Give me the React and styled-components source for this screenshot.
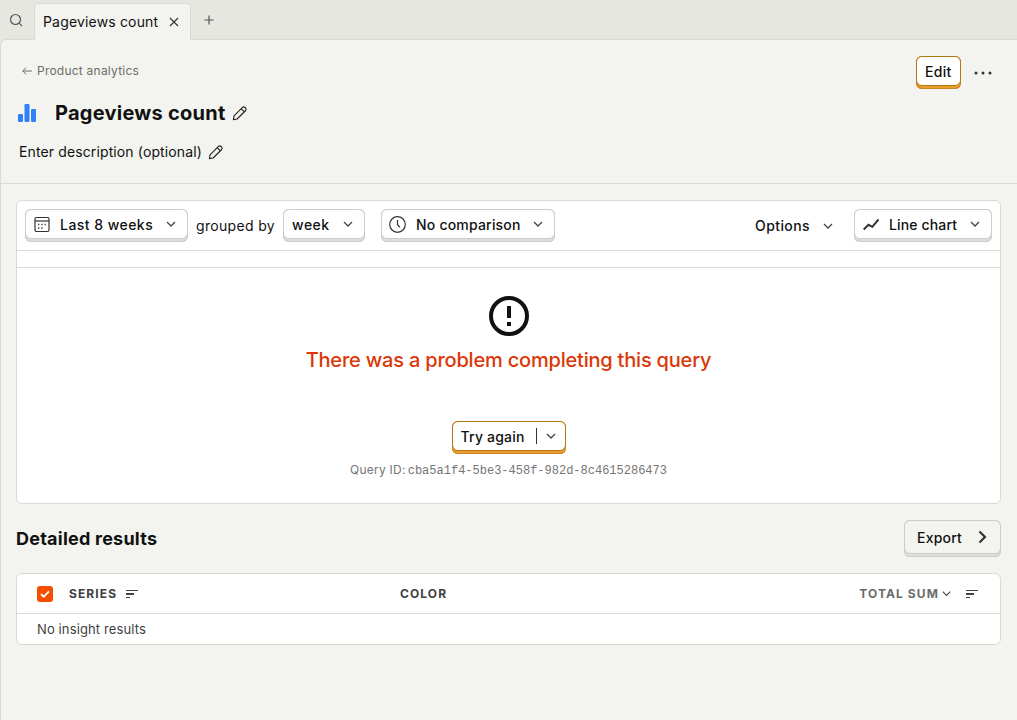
import React from "react";
import styled, { createGlobalStyle } from "styled-components";

const Global = createGlobalStyle`
  *, *::before, *::after { box-sizing: border-box; }
  body {
    margin: 0;
    background: #e5e7e0;
    color: #111;
    font-family: Inter, "Liberation Sans", sans-serif;
    font-size: 14px;
    line-height: 20px;
  }
  svg { display: block; flex: none; }
`;

const Page = styled.div`
  display: flex;
  flex-direction: column;
  width: 100%;
  height: 720px;
  overflow: hidden;
  background: #e5e7e0;
`;

const TabBar = styled.nav`
  display: flex;
  align-items: flex-start;
  height: 39px;
  padding-top: 3px;
  flex: none;
`;

const TabIcon = styled.button`
  display: flex;
  align-items: center;
  justify-content: center;
  width: ${(p) => p.$width}px;
  height: 34px;
  padding: 0;
  border: 0;
  background: none;
  color: #555;
`;

const Tab = styled.div`
  position: relative;
  z-index: 1;
  display: flex;
  align-items: center;
  justify-content: space-between;
  width: 157px;
  height: 37px;
  margin-left: 2px;
  padding: 0 10px 0 8px;
  border: 1px solid #d9dbd2;
  border-bottom: 0;
  border-radius: 5px 5px 0 0;
  background: #f3f4ef;
  letter-spacing: 0.17px;
  white-space: nowrap;
`;

const Scene = styled.main`
  flex: 1;
  border: 1px solid #d9dbd2;
  border-width: 1px 0 0 1px;
  border-radius: 6px 0 0 0;
  background: #f3f4ef;
`;

const Header = styled.header`
  display: flex;
  justify-content: space-between;
  height: 144px;
  padding: 16px 16px 0 16px;
  border-bottom: 1px solid #d9dbd2;
`;

const HeaderText = styled.div`
  display: flex;
  flex-direction: column;
`;

const Breadcrumb = styled.a`
  display: flex;
  align-items: center;
  gap: 5px;
  height: 30px;
  padding-left: 5px;
  color: #6c6d6a;
  font-size: 12px;
  letter-spacing: 0.23px;
`;

const TitleRow = styled.div`
  display: flex;
  align-items: center;
  height: 54px;
`;

const Title = styled.h1`
  margin: 0 6px 0 18px;
  font-size: 20px;
  line-height: 28px;
  font-weight: 700;
  letter-spacing: 0.25px;
  white-space: nowrap;
`;

const Description = styled.div`
  display: flex;
  align-items: center;
  gap: 6px;
  height: 24px;
  padding-left: 2px;
  letter-spacing: 0.12px;
`;

const HeaderActions = styled.div`
  display: flex;
  align-items: flex-start;
  gap: 13px;
  padding-right: 9px;
`;

const MoreButton = styled.button`
  display: flex;
  align-items: center;
  width: 18px;
  height: 33px;
  padding: 0;
  border: 0;
  background: none;
  color: #333;
`;

const ButtonFrame = styled.button`
  flex: none;
  display: block;
  width: ${(p) => p.$width}px;
  height: ${(p) => p.$height || 33}px;
  padding: 0 0 3px;
  border: 0;
  border-radius: 6px;
  font: inherit;
  letter-spacing: ${(p) => p.$spacing || 0.2}px;
  color: #111;
  background: ${(p) => (p.$primary ? "#eb9d2a" : "#e1dddd")};
  box-shadow: inset 0 -1px 0 ${(p) => (p.$primary ? "#c98521" : "#ccc")},
    inset 1px 0 0 ${(p) => (p.$primary ? "#c98521" : "#ccc")},
    inset -1px 0 0 ${(p) => (p.$primary ? "#c98521" : "#ccc")};
`;

const ButtonFace = styled.span`
  display: flex;
  align-items: center;
  height: 100%;
  padding: 0 ${(p) => p.$padRight || 10}px 0 ${(p) => p.$padLeft || 8}px;
  border: 1px solid ${(p) => (p.$primary ? "#b17816" : "#ccc")};
  border-radius: 6px;
  background: ${(p) => (p.$plain ? "#f3f4ef" : "#fff")};
  font-weight: 500;
  white-space: nowrap;
  & > svg:first-child:not(:last-child) { margin: 0 10px 0 -1px; }
  & > svg:last-child { margin-left: auto; }
`;

const ButtonLabel = styled.span`
  padding-top: 2px;
`;

const ButtonRule = styled.span`
  width: 1px;
  height: 16px;
  margin-left: auto;
  margin-right: 8px;
  background: #333;
  & + svg:last-child { margin-left: 0; }
`;

const Content = styled.div`
  padding: 16px 16px 0 15px;
`;

const Card = styled.section`
  border: 1px solid #d9dbd2;
  border-radius: 6px;
  background: #fff;
`;

const Toolbar = styled.div`
  display: flex;
  align-items: flex-start;
  height: 50px;
  padding: 8px 8px 0;
  border-bottom: 1px solid #d9dbd2;
`;

const ToolbarLabel = styled.span`
  width: 95px;
  padding: 7px 0 0 8px;
  letter-spacing: 0.33px;
  white-space: nowrap;
`;

const ToolbarGap = styled.div`
  width: ${(p) => p.$width || 0}px;
  flex: ${(p) => (p.$width ? "none" : 1)};
`;

const OptionsButton = styled.button`
  display: flex;
  align-items: center;
  justify-content: space-between;
  width: 79px;
  height: 33px;
  margin-right: 20px;
  padding: 0;
  border: 0;
  background: none;
  color: #111;
  font: inherit;
  font-weight: 500;
  letter-spacing: 0.42px;
`;

const FilterStrip = styled.div`
  height: 17px;
  border-bottom: 1px solid #d9dbd2;
`;

const ErrorState = styled.div`
  display: flex;
  flex-direction: column;
  align-items: center;
  height: 235px;
  padding-top: 24px;
`;

const ErrorTitle = styled.h2`
  margin: 6px 0 47px;
  color: #db3707;
  font-size: 20px;
  line-height: 28px;
  font-weight: 500;
  letter-spacing: -0.2px;
  white-space: nowrap;
`;

const QueryId = styled.div`
  display: flex;
  gap: 2px;
  margin-top: 8px;
  color: #757575;
  font-size: 12px;
  line-height: 16px;
  letter-spacing: 0.25px;
  white-space: nowrap;
  code {
    font-family: "Liberation Mono", monospace;
    font-size: 12px;
    letter-spacing: 0;
    padding-top: 1px;
  }
`;

const ResultsHeader = styled.div`
  display: flex;
  align-items: center;
  justify-content: space-between;
  padding: 16px 0;
`;

const SectionTitle = styled.h2`
  margin: 0;
  font-size: 18px;
  line-height: 28px;
  font-weight: 700;
  letter-spacing: 0.23px;
`;

const TableHead = styled.div`
  display: grid;
  grid-template-columns: 363px 1fr auto;
  align-items: center;
  height: 40px;
  padding: 0 22px 0 20px;
  border-bottom: 1px solid #d9dbd2;
  color: #3f3f3f;
  font-size: 12px;
  font-weight: 700;
  letter-spacing: 1.1px;
`;

const HeadCell = styled.div`
  display: flex;
  align-items: center;
  color: ${(p) => (p.$muted ? "#6c6d6a" : "inherit")};
`;

const Checkbox = styled.span`
  display: flex;
  align-items: center;
  justify-content: center;
  width: 16px;
  height: 16px;
  margin-right: 16px;
  border-radius: 3px;
  background: #f54e00;
`;

const SortSlot = styled.span`
  margin-left: ${(p) => p.$left}px;
  color: #444;
`;

const EmptyRow = styled.div`
  height: 30px;
  padding: 5px 20px;
  color: #3f3f3f;
  font-size: 13px;
  letter-spacing: 0.12px;
`;

const Chevron = ({ size = 12 }) => (
  <svg width={size} height={size} viewBox="0 0 12 12" fill="none" stroke="#444" strokeWidth="1.25">
    <path d="M2 4l4 4 4-4" />
  </svg>
);

const Pencil = () => (
  <svg width="16" height="16" viewBox="0 0 16 16" fill="none" stroke="#222" strokeWidth="1.1" strokeLinejoin="round">
    <path d="M1.4 14.6l.6-3.7 8.500-8.600q1.300-1 2.500.2l.5.5q1.200 1.200.2 2.500l-8.600 8.500z" />
    <path d="M9.200 3.700l3.100 3.100" />
  </svg>
);

const SortIcon = () => (
  <svg width="12" height="8" viewBox="0 0 12 8" fill="currentColor" shapeRendering="crispEdges">
    <path d="M0 0h12v1H0zM0 3h8v2H0zM0 7h4v1H0z" />
  </svg>
);

const Button = ({ children, label, icon, width, height, spacing, primary, plain, padLeft, padRight }) => (
  <ButtonFrame $width={width} $height={height} $primary={primary} $spacing={spacing}>
    <ButtonFace $primary={primary} $plain={plain} $padLeft={padLeft} $padRight={padRight}>
      {icon}
      <ButtonLabel>{label}</ButtonLabel>
      {children}
    </ButtonFace>
  </ButtonFrame>
);

const CalendarIcon = (
  <svg width="17" height="17" viewBox="0 0 17 17" fill="none" stroke="#333" strokeWidth="1.2">
    <rect x="2" y="1.500" width="14" height="14" rx="1.5" />
    <path d="M2 5h14" />
    <path d="M8.300 8.500h1.300M11.500 8.500h1.300M5 12h1.300M5 8.500h1.300M8.300 12h1.300" strokeWidth="1.4" />
  </svg>
);

const ClockIcon = (
  <svg width="17" height="17" viewBox="0 0 17 17" fill="none" stroke="#333" strokeWidth="1.2">
    <circle cx="8.5" cy="8.5" r="7.800" />
    <path d="M8.500 4v4.500l2.400 2.800" />
  </svg>
);

const TrendIcon = (
  <svg width="17" height="17" viewBox="0 0 17 17" fill="none" stroke="#333" strokeWidth="2">
    <path d="M1.700 13.500l4.800-4.700 3.800 2L16.500 3.500" />
  </svg>
);

export default function App() {
  return (
    <Page>
      <Global />
      <TabBar>
        <TabIcon $width={32}>
          <svg width="14" height="14" viewBox="0 0 14 14" fill="none" stroke="currentColor" strokeWidth="1.2">
            <circle cx="6.5" cy="6.5" r="5" />
            <path d="M10.1 10.1l3 3" />
          </svg>
        </TabIcon>
        <Tab>
          Pageviews count
          <svg width="12" height="12" viewBox="0 0 12 12" stroke="#333" strokeWidth="1.1">
            <path d="M2 2l8 8M10 2l-8 8" />
          </svg>
        </Tab>
        <TabIcon $width={36}>
          <svg width="10" height="10" viewBox="0 0 10 10" stroke="currentColor" strokeWidth="1.2">
            <path d="M5 .5v9M.5 5h9" />
          </svg>
        </TabIcon>
      </TabBar>
      <Scene>
        <Header>
          <HeaderText>
            <Breadcrumb>
              <svg width="10" height="10" viewBox="0 0 10 10" fill="none" stroke="currentColor">
                <path d="M10 5H.8M4.2 1.6L.8 5l3.4 3.4" />
              </svg>
              Product analytics
            </Breadcrumb>
            <TitleRow>
              <svg width="20" height="20" viewBox="0 0 20 20" fill="#2f80fa">
                <rect x="1" y="11" width="5" height="8" rx="1.3" />
                <rect x="7.5" y="1" width="5" height="18" rx="1.3" />
                <rect x="14" y="6" width="5" height="13" rx="1.3" />
              </svg>
              <Title>Pageviews count</Title>
              <Pencil />
            </TitleRow>
            <Description>
              Enter description (optional)
              <Pencil />
            </Description>
          </HeaderText>
          <HeaderActions>
            <Button label="Edit" width={45} spacing={0.3} primary />
            <MoreButton>
              <svg width="18" height="4" viewBox="0 0 18 4" fill="currentColor">
                <circle cx="2" cy="2" r="1.5" />
                <circle cx="9" cy="2" r="1.5" />
                <circle cx="16" cy="2" r="1.5" />
              </svg>
            </MoreButton>
          </HeaderActions>
        </Header>
        <Content>
          <Card>
            <Toolbar>
              <Button icon={CalendarIcon} label="Last 8 weeks" width={163} spacing={0.46}>
                <Chevron />
              </Button>
              <ToolbarLabel>grouped by</ToolbarLabel>
              <Button label="week" width={82} spacing={0.5}>
                <Chevron />
              </Button>
              <ToolbarGap $width={16} />
              <Button icon={ClockIcon} label="No comparison" width={174} spacing={0.2}>
                <Chevron />
              </Button>
              <ToolbarGap />
              <OptionsButton>
                Options
                <Chevron />
              </OptionsButton>
              <Button icon={TrendIcon} label="Line chart" width={138} spacing={0.14}>
                <Chevron />
              </Button>
            </Toolbar>
            <FilterStrip />
            <ErrorState>
              <svg width="48" height="48" viewBox="0 0 48 48" fill="#111">
                <circle cx="24" cy="24" r="18" fill="none" stroke="#111" strokeWidth="4" />
                <path d="M22 14h4v12h-4zM22 30h4v4h-4z" />
              </svg>
              <ErrorTitle>There was a problem completing this query</ErrorTitle>
              <Button label="Try again" width={114} spacing={0.2} primary padRight={8}>
                <ButtonRule />
                <Chevron />
              </Button>
              <QueryId>
                Query ID: <code>cba5a1f4-5be3-458f-982d-8c4615286473</code>
              </QueryId>
            </ErrorState>
          </Card>
          <ResultsHeader>
            <SectionTitle>Detailed results</SectionTitle>
            <Button label="Export" width={97} height={37} plain padLeft={12} padRight={12}>
              <svg width="12" height="14" viewBox="0 0 12 14" fill="none" stroke="#333" strokeWidth="2.2">
                <path d="M3.500 1.500L9 7l-5.500 5.500" />
              </svg>
            </Button>
          </ResultsHeader>
          <Card>
            <TableHead>
              <HeadCell>
                <Checkbox>
                  <svg width="10" height="10" viewBox="0 0 10 10" fill="none" stroke="#fff" strokeWidth="1.8">
                    <path d="M1 5.200l2.700 2.500L9 2.300" />
                  </svg>
                </Checkbox>
                SERIES
                <SortSlot $left={9}><SortIcon /></SortSlot>
              </HeadCell>
              <HeadCell>COLOR</HeadCell>
              <HeadCell $muted>
                TOTAL SUM
                <SortSlot $left={2}><Chevron size={11} /></SortSlot>
                <SortSlot $left={14}><SortIcon /></SortSlot>
              </HeadCell>
            </TableHead>
            <EmptyRow>No insight results</EmptyRow>
          </Card>
        </Content>
      </Scene>
    </Page>
  );
}
